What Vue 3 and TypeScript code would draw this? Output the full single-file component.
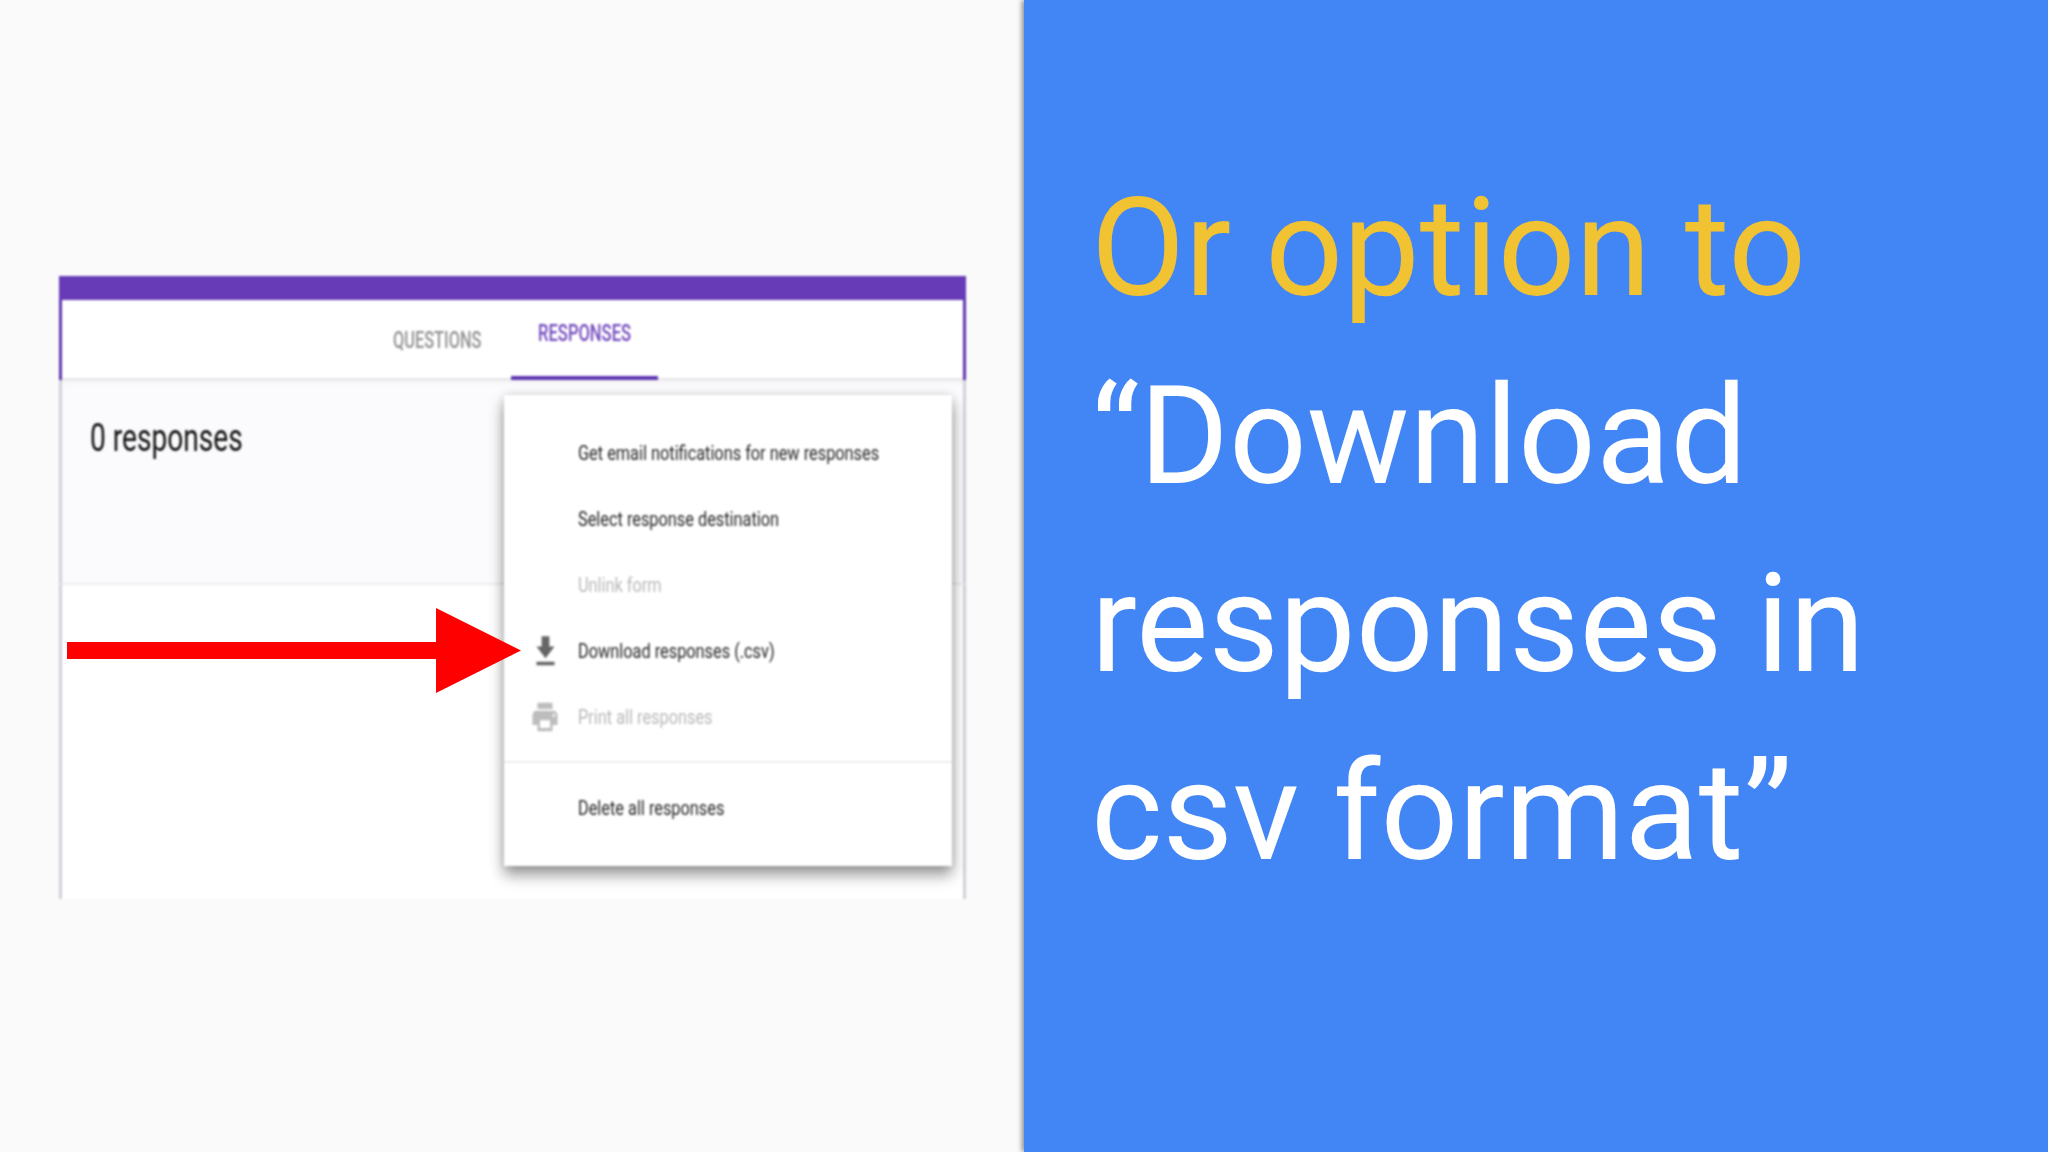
<script setup lang="ts">
interface Item { label: string; icon?: 'download' | 'print'; disabled?: boolean }
const items: Item[] = [
  { label: 'Get email notifications for new responses' },
  { label: 'Select response destination' },
  { label: 'Unlink form', disabled: true },
  { label: 'Download responses (.csv)', icon: 'download' },
  { label: 'Print all responses', icon: 'print', disabled: true },
]
</script>

<template>
  <div class="slide">
    <section class="left">
      <div class="card">
        <div class="bar"></div>
        <div class="tabs">
          <div class="tab first"><span class="squeeze q">QUESTIONS</span></div>
          <div class="tab active"><span class="squeeze r">RESPONSES</span></div>
        </div>
        <div class="summary"><span class="squeeze count">0 responses</span></div>
        <div class="empty"></div>
        <div class="menu">
          <div class="group">
            <div v-for="item in items" :key="item.label" class="row" :class="{ off: item.disabled }">
              <span class="slot">
                <svg v-if="item.icon === 'download'" class="ic-down" viewBox="0 0 24 24" preserveAspectRatio="none">
                  <path d="M15 3H9v6H5l7 7 7-7h-4zM5 18v2h14v-2z" />
                </svg>
                <svg v-else-if="item.icon === 'print'" class="ic-print" viewBox="0 0 24 24" preserveAspectRatio="none">
                  <path d="M19 8H5c-1.66 0-3 1.34-3 3v6h4v4h12v-4h4v-6c0-1.66-1.34-3-3-3zm-3 11H8v-5h8v5zm3-7c-.55 0-1-.45-1-1s.45-1 1-1 1 .45 1 1-.45 1-1 1zm-1-9H6v4h12V3z" />
                </svg>
              </span>
              <span class="squeeze label">{{ item.label }}</span>
            </div>
          </div>
          <div class="group last">
            <div class="row">
              <span class="slot"></span>
              <span class="squeeze label">Delete all responses</span>
            </div>
          </div>
        </div>
      </div>
      <svg class="arrow" viewBox="0 0 454 86" aria-hidden="true">
        <path d="M0 34h369V0l85 42.500-85 42.500V51H0z" />
      </svg>
    </section>
    <section class="right">
      <p class="copy">
        <span class="line gold">Or option to</span>
        <span class="line">“Download</span>
        <span class="line">responses in</span>
        <span class="line">csv format”</span>
      </p>
    </section>
  </div>
</template>

<style>
html, body { margin: 0; background: #fafafa; }
</style>

<style scoped>
.slide {
  width: 2048px;
  height: 1152px;
  display: flex;
  overflow: hidden;
  font-family: Roboto, "Liberation Sans", sans-serif;
}
.left {
  position: relative;
  width: 1024px;
  flex: none;
  box-sizing: border-box;
  padding: 276px 0 0 59px;
  background: #fafafa;
}
.right {
  flex: 1;
  background: #4285f4;
  box-shadow: -2px 0 5px rgba(0, 0, 0, 0.45);
  position: relative;
  padding: 154px 0 0 67px;
}
.copy {
  margin: 0;
  font-size: 136.6px;
  line-height: 188px;
  color: #fff;
  white-space: nowrap;
}
.line { display: block; }
.gold { color: #f1c232; }

.card {
  position: relative;
  width: 907px;
  filter: blur(0.9px);
}
.bar { height: 24px; background: #673ab7; }
.tabs {
  height: 80px;
  box-sizing: border-box;
  display: flex;
  padding-left: 302px;
  background: #fff;
  border-left: 3px solid #6236b0;
  border-right: 3px solid #6236b0;
  box-shadow: inset 0 -2px 0 #e6e6e8;
}
.tab {
  width: 147px;
  box-sizing: border-box;
  text-align: center;
  padding-top: 28px;
  font-size: 23px;
  line-height: 26px;
  font-weight: 500;
  color: #929292;
}
.tab.active {
  padding-top: 21px;
  color: #7248bd;
  border-bottom: 4px solid #5e35b1;
}
.squeeze { display: inline-block; white-space: nowrap; }
.q { transform: scaleX(0.71); }
.r { transform: scaleX(0.72); }
.summary {
  height: 205px;
  box-sizing: border-box;
  padding: 32px 0 0 28px;
  background: #fbfafc;
  border: solid #d2d2d8;
  border-width: 0 3px 2px;
  border-bottom-color: #ececf0;
  box-shadow: inset 0 6px 6px -4px rgba(0, 0, 0, 0.05);
  font-size: 38px;
  line-height: 52px;
  color: #111;
}
.count { transform: scaleX(0.74); transform-origin: left center; }
.empty {
  height: 314px;
  background: #fff;
  border: solid #d2d2d8;
  border-width: 0 3px;
}
.menu {
  position: absolute;
  left: 445px;
  top: 119px;
  width: 448px;
  height: 471px;
  box-sizing: border-box;
  padding-top: 25px;
  background: #fff;
  box-shadow: 0 9px 14px rgba(0, 0, 0, 0.4), 0 0 8px rgba(0, 0, 0, 0.14);
}
.group { padding-bottom: 11px; }
.group.last {
  padding-top: 12px;
  padding-bottom: 0;
  border-top: 2px solid #ececf0;
}
.row {
  height: 66px;
  display: flex;
  align-items: center;
  font-size: 21px;
  color: #262626;
}
.row.off { color: #b8b8b8; }
.slot {
  width: 74px;
  flex: none;
  box-sizing: border-box;
  padding-left: 8px;
  display: flex;
  justify-content: center;
  fill: #666;
}
.row.off .slot { fill: #bdbdbd; }
.ic-down { width: 31px; height: 41px; }
.ic-print { width: 30px; height: 38px; }
.label { transform: scaleX(0.777); transform-origin: left center; }

.arrow {
  position: absolute;
  left: 67px;
  top: 608px;
  width: 454px;
  height: 86px;
  fill: #ff0000;
}
</style>
